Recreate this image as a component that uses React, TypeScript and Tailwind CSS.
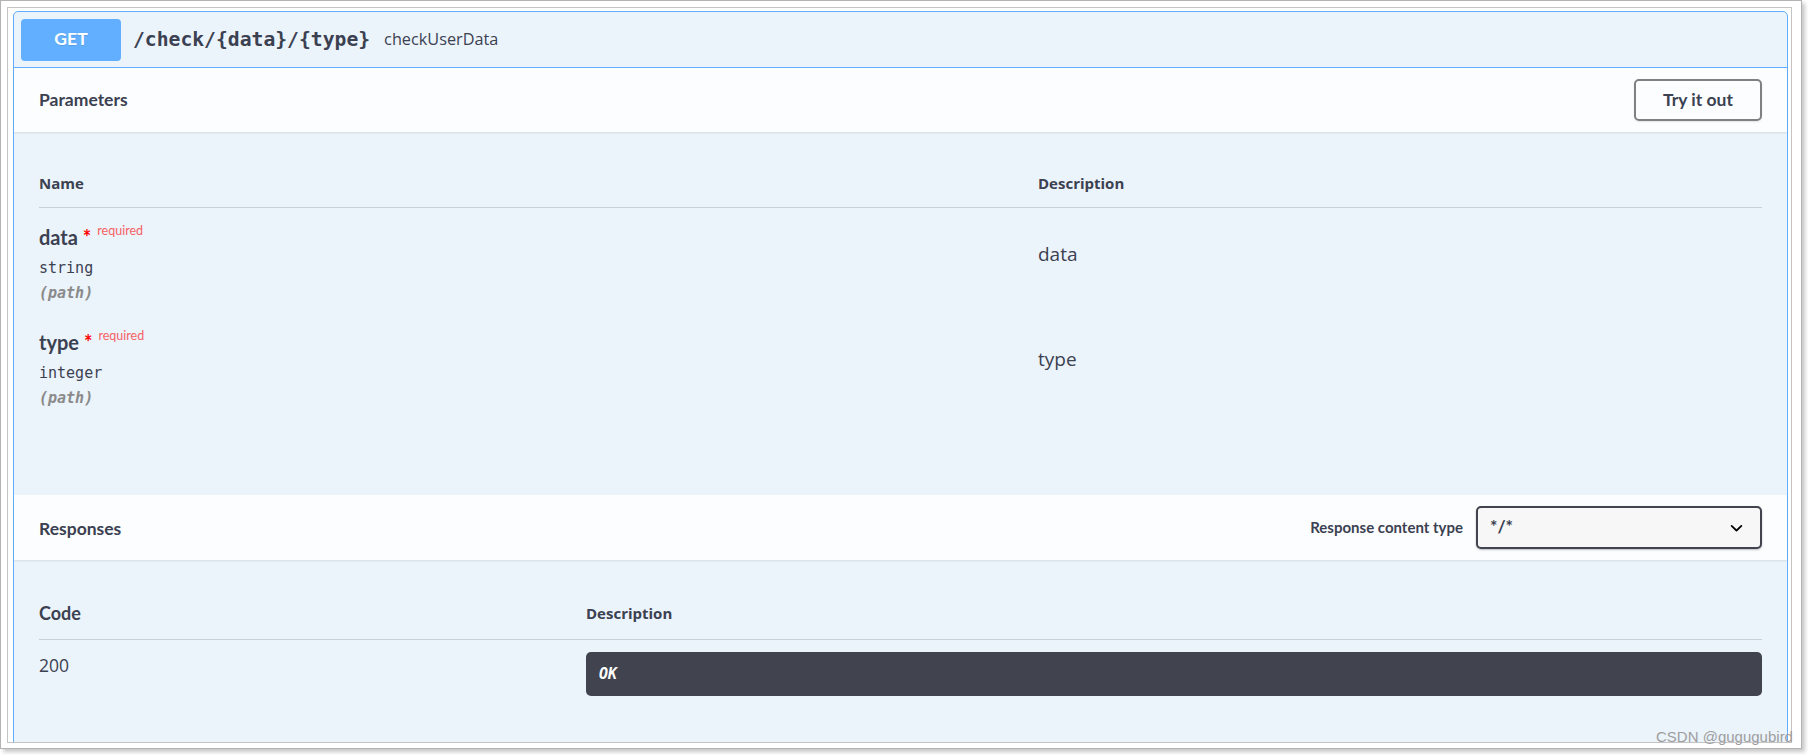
const LATO = "font-['Lato',sans-serif]";
const OPEN = "font-['Open_Sans',sans-serif]";
const MONO = "font-['DejaVu_Sans_Mono',monospace]";

function ParamRow({ name, type }: { name: string; type: string }) {
  return (
    <div className="grid grid-cols-[999px_1fr] pt-[16px] pb-[9px]">
      <div>
        <div className={`${LATO} h-[26px] leading-[26px] text-[20px] font-bold text-[#3b4151] flex items-start whitespace-nowrap`}>
          <span>{name}</span>
          <span className="text-[#ff0000]">{"\u00a0*"}</span>
          <span className="relative top-[-6px] pl-[6px] text-[12.5px] font-normal text-[#f76164]">required</span>
        </div>
        <div className={`${MONO} mt-[7px] h-[22px] leading-[22px] text-[15px] text-[#3b4151]`}>{type}</div>
        <div className={`${MONO} mt-[3px] h-[22px] leading-[22px] text-[15px] italic font-bold text-[#8a8a8a]`}>(path)</div>
      </div>
      <div className={`${OPEN} mt-[17px] h-[26px] leading-[26px] text-[19px] text-[#3b4151]`}>{name}</div>
    </div>
  );
}

export default function App() {
  return (
    <div className="relative w-[1808px] h-[755px] bg-white overflow-hidden">
      <div className="w-[1802px] h-[749px] border border-[#b3b3b3] bg-white shadow-[3px_3px_4px_rgba(0,0,0,0.22)] pl-[6px] pt-[6px]">
        <div className="w-[1785px] h-[736px] border border-[#c4c4c4] bg-white overflow-hidden pl-[5px] pt-[3px]">
          <div className="w-[1775px] border border-[#61affe] rounded-t-[5px] bg-[#ebf3fb] text-[#3b4151]">
            {/* summary */}
            <div className="flex items-center h-[56px] border-b border-[#61affe] px-[7px]">
              <div className={`${LATO} w-[100px] h-[42px] rounded-[4px] bg-[#61affe] text-white text-[17.5px] font-bold flex items-center justify-center [text-shadow:0_1px_0_rgba(0,0,0,0.1)]`}>
                GET
              </div>
              <div className={`${MONO} ml-[12px] text-[19.7px] font-bold text-[#3b4151] whitespace-nowrap`}>
                /check/{"{data}"}/{"{type}"}
              </div>
              <div className={`${OPEN} ml-[14px] text-[16.25px] text-[#3b4151]`}>checkUserData</div>
            </div>

            {/* parameters header */}
            <div className="relative z-[1] flex items-center justify-between h-[64px] px-[25px] bg-[#fbfdff] shadow-[0_1px_2px_rgba(0,0,0,0.1)]">
              <div className={`${LATO} text-[17.5px] font-bold text-[#3b4151]`}>Parameters</div>
              <button className={`${LATO} w-[128px] h-[42px] border-2 border-[#808080] rounded-[5px] bg-transparent text-[17.5px] font-bold text-[#3b4151] shadow-[0_1px_2px_rgba(0,0,0,0.1)]`}>
                Try it out
              </button>
            </div>

            {/* parameters body */}
            <div className="h-[363px] px-[25px] pt-[27px]">
              <div className={`${OPEN} grid grid-cols-[999px_1fr] items-center h-[49px] border-b border-[#c8cfd9] text-[15px] font-bold text-[#3b4151]`}>
                <div>Name</div>
                <div>Description</div>
              </div>
              <ParamRow name="data" type="string" />
              <ParamRow name="type" type="integer" />
            </div>

            {/* responses header */}
            <div className="relative z-[1] flex items-center justify-between h-[65px] px-[25px] bg-[#fbfdff] shadow-[0_1px_2px_rgba(0,0,0,0.1)]">
              <div className={`${LATO} text-[17.5px] font-bold text-[#3b4151] pt-[3px]`}>Responses</div>
              <div className="flex items-center">
                <div className={`${LATO} text-[15px] font-bold text-[#3b4151] mr-[13px]`}>Response content type</div>
                <div className="relative w-[286px] h-[43px] border-2 border-[#41444e] rounded-[5px] bg-[#f7f7f7] shadow-[0_1px_2px_rgba(0,0,0,0.25)] flex items-center pl-[12px]">
                  <span className={`${LATO} text-[17.5px] font-bold text-[#3b4151]`}>*/*</span>
                  <svg className="absolute right-[11px] top-1/2 -translate-y-1/2" width="25" height="25" viewBox="0 0 20 20">
                    <path
                      d="M13.418 7.859a.695.695 0 01.978 0 .68.68 0 010 .969l-3.908 3.83a.697.697 0 01-.979 0l-3.908-3.83a.68.68 0 010-.969.695.695 0 01.978 0L10 11z"
                      fill="#000"
                    />
                  </svg>
                </div>
              </div>
            </div>

            {/* responses body */}
            <div className="px-[25px] pt-[27px] pb-[60px]">
              <div className="grid grid-cols-[547px_1fr] items-center h-[53px] border-b border-[#c8cfd9]">
                <div className={`${LATO} text-[18px] font-bold text-[#3b4151]`}>Code</div>
                <div className={`${OPEN} text-[15px] font-bold text-[#3b4151]`}>Description</div>
              </div>
              <div className="grid grid-cols-[547px_1fr] pt-[12px]">
                <div className={`${OPEN} h-[26px] leading-[26px] text-[17.5px] text-[#3b4151]`}>200</div>
                <div className="h-[44px] rounded-[5px] bg-[#41444e] flex items-center pl-[13px]">
                  <span className={`${MONO} text-[15px] font-bold italic text-white`}>OK</span>
                </div>
              </div>
            </div>
          </div>
        </div>
      </div>
      <div className={`absolute left-[1656px] top-[728px] text-[15px] leading-[18px] text-[#9e9e9e] font-['Liberation_Sans',sans-serif] whitespace-nowrap`}>
        CSDN @gugugubird
      </div>
    </div>
  );
}
